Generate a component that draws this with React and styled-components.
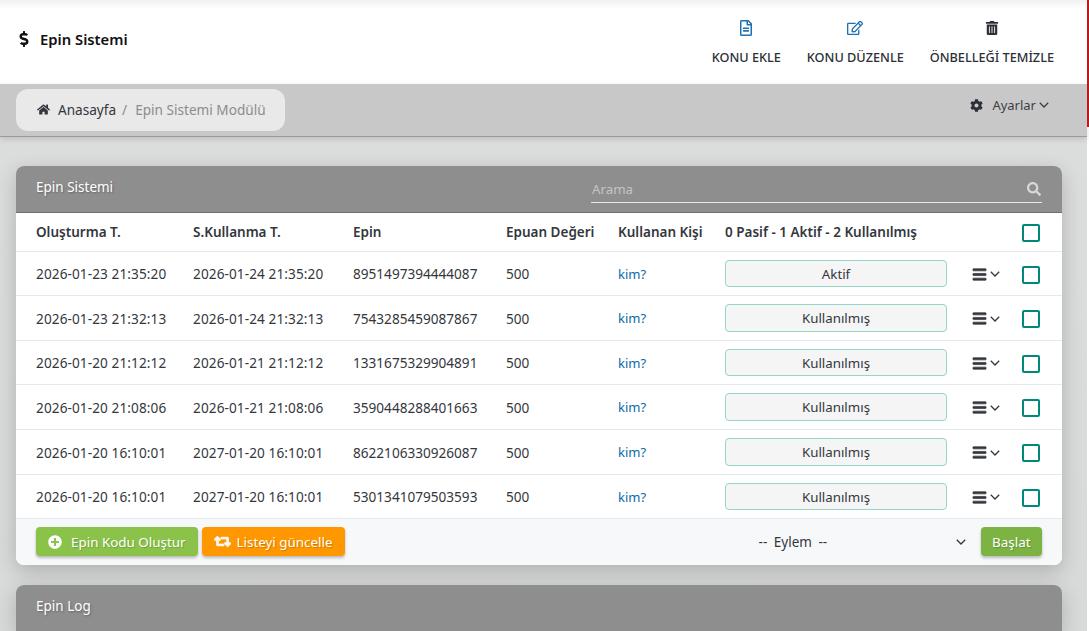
import React from 'react';
import styled, { createGlobalStyle } from 'styled-components';
import {
  FaDollarSign, FaRegFileAlt, FaRegEdit, FaTrashAlt, FaHome, FaCog, FaSearch, FaBars, FaPlusCircle, FaRetweet,
} from 'react-icons/fa';

const GlobalStyle = createGlobalStyle`
  html, body {
    margin: 0;
    height: 100%;
    overflow: hidden;
    background: #fff;
    font-family: "Noto Sans", "Open Sans", sans-serif;
    color: #33373d;
  }
  * { box-sizing: border-box; }
`;

const Page = styled.div`
  position: relative;
  width: 1087px;
  height: 631px;
  background: linear-gradient(#d3d4d4, #dcdddd 60px, #d8d9d9);
`;

const RedEdge = styled.div`
  position: absolute;
  top: 0;
  left: 1087px;
  width: 2px;
  height: 127px;
  background: #b71c1c;
`;

const Header = styled.header`
  height: 84px;
  background: linear-gradient(#f1f1f1, #fff 9px);
  display: flex;
  align-items: flex-start;
  justify-content: space-between;
  padding: 0 33px 0 16px;
`;

const Title = styled.h1`
  margin: 31px 0 0;
  display: flex;
  align-items: center;
  gap: 8px;
  font-size: 14.8px;
  line-height: 16px;
  font-weight: 600;
  color: #111;
  svg { font-size: 16px; }
`;

const HeaderActions = styled.div`
  display: flex;
  gap: 26px;
  padding-top: 20px;
`;

const HeaderAction = styled.a`
  display: flex;
  flex-direction: column;
  align-items: center;
  gap: 13px;
  font-size: 12.7px;
  line-height: 16px;
  font-weight: 500;
  color: #2b2f36;
  svg {
    color: ${(p) => p.$iconColor};
    font-size: ${(p) => p.$iconSize ?? 16}px;
    margin: ${(p) => (16 - (p.$iconSize ?? 16)) / 2}px 0;
  }
`;

const CrumbBar = styled.div`
  height: 53px;
  background: #c8c8c8;
  border-bottom: 1px solid #9a9a9a;
  box-shadow: 0 2px 6px rgba(0, 0, 0, 0.14);
  padding: 5px 38px 0 16px;
  display: flex;
  justify-content: space-between;
  align-items: flex-start;
`;

const Crumbs = styled.div`
  width: 269px;
  height: 42px;
  border-radius: 12px;
  background: #e9e9e9;
  display: flex;
  align-items: center;
  padding: 0 0 1px 21px;
  font-size: 13.6px;
  color: #33373d;
  svg { font-size: 13px; margin-right: 8px; }
`;

const CrumbSep = styled.span`
  color: #8a8a8a;
  margin: 0 8px 0 6px;
`;

const CrumbCurrent = styled.span`
  color: #8c8c8c;
`;

const Settings = styled.div`
  display: flex;
  align-items: center;
  height: 32px;
  font-size: 13px;
  color: #3a3f46;
  svg:first-child { font-size: 13px; margin-right: 9px; color: #2b2f36; }
  svg:last-child { margin-left: 3px; }
`;

const Content = styled.main`
  padding: 29px 25px 0 16px;
  display: flex;
  flex-direction: column;
  gap: 20px;
`;

const Card = styled.section`
  background: #fff;
  border-radius: 8px;
  box-shadow: 0 6px 20px rgba(0, 0, 0, 0.2);
`;

const CardHead = styled.div`
  height: 47px;
  background: #8e8e8e;
  border-bottom: 1px solid #6f6f6f;
  border-radius: 8px 8px 0 0;
  padding: 11px 20px 0;
  display: flex;
  justify-content: space-between;
  align-items: flex-start;
`;

const CardTitle = styled.span`
  font-size: 13.5px;
  line-height: 20px;
  color: #fff;
  text-shadow: 1px 1px 2px rgba(0, 0, 0, 0.3);
`;

const Search = styled.div`
  width: 451px;
  height: 26px;
  border-bottom: 1px solid #e8e8e8;
  display: flex;
  align-items: center;
  justify-content: space-between;
  padding: 0 1px 2px;
  font-size: 13.3px;
  color: #c4c4c4;
  svg { font-size: 14px; color: #d8d8d8; }
`;

const Table = styled.div`
  display: grid;
  grid-template-columns: 177px 160px 153px 112px 107px 247px 50px 1fr;
`;

const Row = styled.div`
  display: contents;
  & > div { height: ${(p) => p.$height}px; border-bottom: 1px solid #e4e9ef; }
`;

const Cell = styled.div`
  display: flex;
  align-items: center;
  font-size: ${(p) => (p.$head ? 13.5 : 13.6)}px;
  letter-spacing: ${(p) => (p.$date ? '0.1px' : 'normal')};
  color: #33373d;
  font-weight: ${(p) => (p.$head ? 600 : 400)};
  white-space: nowrap;
  padding-left: ${(p) => p.$pad ?? 0}px;
`;

const KimLink = styled.a`
  font-size: 13px;
  color: #0b6aa8;
`;

const StatusPill = styled.div`
  width: 222px;
  height: calc(100% - 16px);
  border: 1px solid #97d4cb;
  border-radius: 4px;
  background: #f5f5f5;
  display: flex;
  align-items: center;
  justify-content: center;
  font-size: 13.3px;
`;

const RowMenu = styled.div`
  display: flex;
  align-items: center;
  gap: 3px;
  margin-top: 1px;
  color: #33373d;
  svg:first-child { font-size: 15px; stroke: currentColor; stroke-width: 24; }
`;

const Check = styled.div`
  width: 18px;
  height: 18px;
  margin-top: 2px;
  border: 2px solid #00897b;
  border-radius: 2px;
  background: #fff;
`;

const Foot = styled.div`
  height: 46px;
  background: #f7f8fa;
  border-radius: 0 0 8px 8px;
  padding: 0 20px 1px;
  display: flex;
  align-items: center;
  gap: 4px;
`;

const ActionButton = styled.button`
  height: 29px;
  padding: 0 ${(p) => p.$padX ?? 12}px;
  border: 0;
  border-radius: 4px;
  background: ${(p) => p.$bg};
  color: #fff;
  font: inherit;
  font-size: 13.4px;
  display: flex;
  align-items: center;
  gap: ${(p) => p.$gap ?? 8}px;
  box-shadow: 0 2px 3px rgba(0, 0, 0, 0.25);
  text-shadow: 1px 1px 1px rgba(0, 0, 0, 0.2);
  svg { font-size: ${(p) => p.$iconSize ?? 14}px; }
`;

const RetweetIcon = styled(FaRetweet)`
  stroke: currentColor;
  stroke-width: 30;
`;

const EylemSelect = styled.div`
  margin-left: auto;
  width: 223px;
  height: 29px;
  display: flex;
  align-items: center;
  justify-content: space-between;
  padding-left: 10px;
  padding-right: 6px;
  margin-right: 5px;
  font-size: 13.5px;
  word-spacing: 3px;
  color: #33373d;
`;

const Chevron = () => (
  <svg width="10" height="6" viewBox="0 0 10 6" fill="none" stroke="currentColor" strokeWidth="1.3">
    <polyline points="0.8,0.8 5,5 9.2,0.8" />
  </svg>
);

const rows = [
  ['2026-01-23 21:35:20', '2026-01-24 21:35:20', '8951497394444087', 'Aktif', 44],
  ['2026-01-23 21:32:13', '2026-01-24 21:32:13', '7543285459087867', 'Kullanılmış', 45],
  ['2026-01-20 21:12:12', '2026-01-21 21:12:12', '1331675329904891', 'Kullanılmış', 44],
  ['2026-01-20 21:08:06', '2026-01-21 21:08:06', '3590448288401663', 'Kullanılmış', 45],
  ['2026-01-20 16:10:01', '2027-01-20 16:10:01', '8622106330926087', 'Kullanılmış', 45],
  ['2026-01-20 16:10:01', '2027-01-20 16:10:01', '5301341079503593', 'Kullanılmış', 44],
];

export default function App() {
  return (
    <Page>
      <GlobalStyle />
      <RedEdge />
      <Header>
        <Title><FaDollarSign />Epin Sistemi</Title>
        <HeaderActions>
          <HeaderAction $iconColor="#1f6fb2"><FaRegFileAlt />KONU EKLE</HeaderAction>
          <HeaderAction $iconColor="#1f6fb2"><FaRegEdit />KONU DÜZENLE</HeaderAction>
          <HeaderAction $iconColor="#2b2f36" $iconSize={14}><FaTrashAlt />ÖNBELLEĞİ TEMİZLE</HeaderAction>
        </HeaderActions>
      </Header>
      <CrumbBar>
        <Crumbs>
          <FaHome />Anasayfa<CrumbSep>/</CrumbSep><CrumbCurrent>Epin Sistemi Modülü</CrumbCurrent>
        </Crumbs>
        <Settings><FaCog />Ayarlar<Chevron /></Settings>
      </CrumbBar>
      <Content>
        <Card>
          <CardHead>
            <CardTitle>Epin Sistemi</CardTitle>
            <Search>Arama<FaSearch /></Search>
          </CardHead>
          <Table>
            <Row $height={39}>
              <Cell $head $pad={20}>Oluşturma T.</Cell>
              <Cell $head>S.Kullanma T.</Cell>
              <Cell $head>Epin</Cell>
              <Cell $head>Epuan Değeri</Cell>
              <Cell $head>Kullanan Kişi</Cell>
              <Cell $head>0 Pasif - 1 Aktif - 2 Kullanılmış</Cell>
              <Cell />
              <Cell><Check /></Cell>
            </Row>
            {rows.map((r) => (
              <Row key={r[2]} $height={r[4]}>
                <Cell $pad={20} $date>{r[0]}</Cell>
                <Cell $date>{r[1]}</Cell>
                <Cell>{r[2]}</Cell>
                <Cell>500</Cell>
                <Cell><KimLink>kim?</KimLink></Cell>
                <Cell><StatusPill>{r[3]}</StatusPill></Cell>
                <Cell><RowMenu><FaBars /><Chevron /></RowMenu></Cell>
                <Cell><Check /></Cell>
              </Row>
            ))}
          </Table>
          <Foot>
            <ActionButton $bg="#8bc34a" $gap={9}><FaPlusCircle />Epin Kodu Oluştur</ActionButton>
            <ActionButton $bg="#ff9800" $iconSize={17} $gap={6}><RetweetIcon />Listeyi güncelle</ActionButton>
            <EylemSelect>-- Eylem --<Chevron /></EylemSelect>
            <ActionButton $bg="#7cb342" $padX={11.5}>Başlat</ActionButton>
          </Foot>
        </Card>
        <Card>
          <CardHead><CardTitle>Epin Log</CardTitle></CardHead>
        </Card>
      </Content>
    </Page>
  );
}
